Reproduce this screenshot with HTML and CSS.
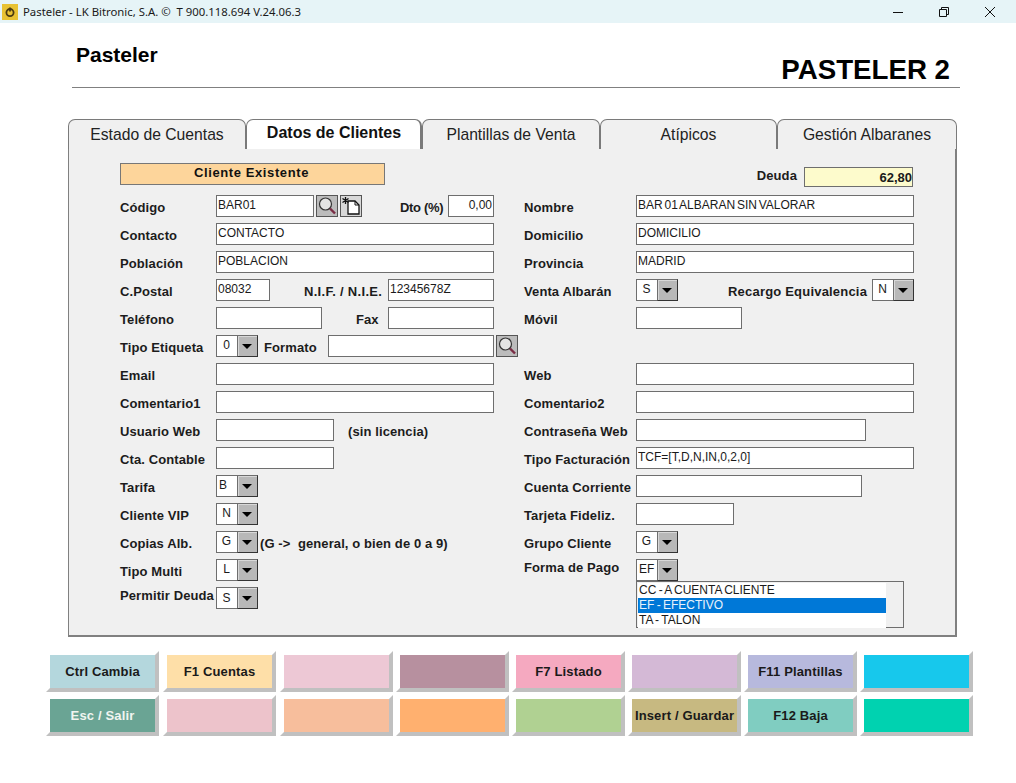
FILE: index.html
```html
<!DOCTYPE html>
<html>
<head>
  <title>Pasteler</title>
  <link rel="stylesheet" href="styles.css">
</head>
<body>
  <div class="titlebar">
    <svg class="app-icon" width="16" height="16" viewBox="0 0 16 16">
      <rect width="16" height="16" fill="#e8c233"/>
      <circle cx="8" cy="8.6" r="3.6" fill="none" stroke="#4a3a10" stroke-width="1.8"/>
      <path d="M8 3.5v4" stroke="#4a3a10" stroke-width="1.8"/>
    </svg>
    <span class="window-title">Pasteler - LK Bitronic, S.A. ©&nbsp; T 900.118.694 V.24.06.3</span>
    <div class="window-controls">
      <svg width="12" height="12" viewBox="0 0 12 12"><path d="M1 6.5h10" stroke="#111" stroke-width="1"/></svg>
      <svg width="12" height="12" viewBox="0 0 12 12"><path d="M1.5 3.5h7v7h-7zM3.500 3.500v-2h7v7h-2" fill="none" stroke="#111" stroke-width="1"/></svg>
      <svg width="12" height="12" viewBox="0 0 12 12"><path d="M1 1l10 10M11 1L1 11" stroke="#111" stroke-width="1"/></svg>
    </div>
  </div>

  <div class="header">
    <h2 class="app-name">Pasteler</h2>
    <h1 class="app-version">PASTELER 2</h1>
  </div>

  <div class="tabs">
    <div class="tab">Estado de Cuentas</div>
    <div class="tab active">Datos de Clientes</div>
    <div class="tab">Plantillas de Venta</div>
    <div class="tab">Atípicos</div>
    <div class="tab">Gestión Albaranes</div>
  </div>

  <div class="panel">
    <div class="status-row">
      <div class="status">Cliente Existente</div>
      <div class="debt">
        <label>Deuda</label>
        <input class="debt-value" value="62,80">
      </div>
    </div>

    <div class="form">
      <div class="column">
        <div class="row">
          <label class="name">Código</label>
          <input class="w98" value="BAR01">
          <button class="icon-btn search">
            <svg width="20" height="20" viewBox="0 0 20 20"><circle cx="8.500" cy="8" r="6" fill="#e4e4e4" stroke="#333" stroke-width="1.200"/><path d="M13 12.500l5 5" stroke="#7a2c44" stroke-width="2.400"/></svg>
          </button>
          <button class="icon-btn new">
            <svg width="20" height="20" viewBox="0 0 20 20"><path d="M7 5h7l4 4v9H7z" fill="#fff" stroke="#111" stroke-width="1.300"/><path d="M14 5v4h4" fill="none" stroke="#111"/><path d="M4.500 1v7M1.500 2.500l6 4M7.500 2.500l-6 4" stroke="#111" stroke-width="1.300"/></svg>
          </button>
          <label class="side dto">Dto (%)</label>
          <input class="w46 num" value="0,00">
        </div>
        <div class="row"><label class="name">Contacto</label><input class="w278" value="CONTACTO"></div>
        <div class="row"><label class="name">Población</label><input class="w278" value="POBLACION"></div>
        <div class="row">
          <label class="name">C.Postal</label>
          <input class="w54" value="08032">
          <label class="side nif">N.I.F. / N.I.E.</label>
          <input class="w106" value="12345678Z">
        </div>
        <div class="row">
          <label class="name">Teléfono</label>
          <input class="w106">
          <label class="side fax">Fax</label>
          <input class="w106">
        </div>
        <div class="row">
          <label class="name">Tipo Etiqueta</label>
          <div class="combo"><input value="0" class="center"><span class="arrow"></span></div>
          <label class="side formato">Formato</label>
          <input class="w166">
          <button class="icon-btn search next">
            <svg width="20" height="20" viewBox="0 0 20 20"><circle cx="8.500" cy="8" r="6" fill="#e4e4e4" stroke="#333" stroke-width="1.200"/><path d="M13 12.500l5 5" stroke="#7a2c44" stroke-width="2.400"/></svg>
          </button>
        </div>
        <div class="row"><label class="name">Email</label><input class="w278"></div>
        <div class="row"><label class="name">Comentario1</label><input class="w278"></div>
        <div class="row">
          <label class="name">Usuario Web</label>
          <input class="w118">
          <label class="side licence">(sin licencia)</label>
        </div>
        <div class="row"><label class="name">Cta. Contable</label><input class="w118"></div>
        <div class="row">
          <label class="name">Tarifa</label>
          <div class="combo"><input value="B"><span class="arrow"></span></div>
        </div>
        <div class="row">
          <label class="name">Cliente VIP</label>
          <div class="combo"><input value="N" class="center"><span class="arrow"></span></div>
        </div>
        <div class="row">
          <label class="name">Copias Alb.</label>
          <div class="combo"><input value="G" class="center"><span class="arrow"></span></div>
          <label class="side hint">(G -&gt;&nbsp; general, o bien de 0 a 9)</label>
        </div>
        <div class="row">
          <label class="name">Tipo Multi</label>
          <div class="combo"><input value="L" class="center"><span class="arrow"></span></div>
        </div>
        <div class="row">
          <label class="name raised">Permitir Deuda</label>
          <div class="combo"><input value="S" class="center low"><span class="arrow"></span></div>
        </div>
      </div>

      <div class="column right">
        <div class="row"><label class="name">Nombre</label><input class="w278" value="BAR 01 ALBARAN SIN VALORAR"></div>
        <div class="row"><label class="name">Domicilio</label><input class="w278" value="DOMICILIO"></div>
        <div class="row"><label class="name">Provincia</label><input class="w278" value="MADRID"></div>
        <div class="row">
          <label class="name">Venta Albarán</label>
          <div class="combo"><input value="S" class="center"><span class="arrow"></span></div>
          <label class="side recargo">Recargo Equivalencia</label>
          <div class="combo"><input value="N" class="center"><span class="arrow"></span></div>
        </div>
        <div class="row"><label class="name">Móvil</label><input class="w106"></div>
        <div class="row"></div>
        <div class="row"><label class="name">Web</label><input class="w278"></div>
        <div class="row"><label class="name">Comentario2</label><input class="w278"></div>
        <div class="row"><label class="name">Contraseña Web</label><input class="w230"></div>
        <div class="row"><label class="name">Tipo Facturación</label><input class="w278" value="TCF=[T,D,N,IN,0,2,0]"></div>
        <div class="row"><label class="name">Cuenta Corriente</label><input class="w226"></div>
        <div class="row"><label class="name">Tarjeta Fideliz.</label><input class="w98"></div>
        <div class="row">
          <label class="name">Grupo Cliente</label>
          <div class="combo"><input value="G" class="center"><span class="arrow"></span></div>
        </div>
        <div class="row">
          <label class="name raised">Forma de Pago</label>
          <div class="combo open">
            <input value="EF"><span class="arrow"></span>
            <ul class="dropdown">
              <li>CC - A CUENTA CLIENTE</li>
              <li class="selected">EF - EFECTIVO</li>
              <li>TA - TALON</li>
            </ul>
          </div>
        </div>
      </div>
    </div>
  </div>

  <div class="keys">
    <button class="key" style="background-color:#b4d7dd">Ctrl Cambia</button>
    <button class="key" style="background-color:#fedfa8">F1 Cuentas</button>
    <button class="key" style="background-color:#edc8d5"></button>
    <button class="key" style="background-color:#b7909f"></button>
    <button class="key" style="background-color:#f5a9c0">F7 Listado</button>
    <button class="key" style="background-color:#d4b9d6"></button>
    <button class="key" style="background-color:#b7b9dd">F11 Plantillas</button>
    <button class="key" style="background-color:#17c8ec"></button>
    <button class="key light" style="background-color:#6aa494">Esc / Salir</button>
    <button class="key" style="background-color:#edc3cb"></button>
    <button class="key" style="background-color:#f7be9c"></button>
    <button class="key" style="background-color:#ffb06f"></button>
    <button class="key" style="background-color:#b0d192"></button>
    <button class="key" style="background-color:#c7b981">Insert / Guardar</button>
    <button class="key" style="background-color:#80cdc1">F12 Baja</button>
    <button class="key" style="background-color:#00d2b0"></button>
  </div>
</body>
</html>
```

FILE: styles.css
```css
body {
  margin: 0;
  background-color: #fff;
  color: #111;
  font-family: "Liberation Sans", Arial, sans-serif;
  font-size: 13px;
}

/* Window title bar */
.titlebar {
  display: flex;
  align-items: center;
  height: 23px;
  padding-left: 2px;
  background-color: #e6f4f7;
}

.app-icon {
  margin-right: 5px;
}

.window-title {
  font-family: "Noto Sans", sans-serif;
  font-size: 11.350px;
  color: #1a1a1a;
}

.window-controls {
  display: flex;
  gap: 34px;
  margin-left: auto;
  margin-right: 20px;
}

/* Page header */
.header {
  display: flex;
  justify-content: space-between;
  width: 874px;
  height: 64px;
  margin-left: 72px;
  padding: 0 10px 0 4px;
  border-bottom: 1px solid #808080;
}

.app-name {
  margin: 20px 0 0;
  font-size: 21px;
  line-height: 24px;
  color: #000;
}

.app-version {
  margin: 30px 0 0;
  font-size: 27.700px;
  line-height: 33px;
  color: #000;
}

/* Tabs */
.tabs {
  display: grid;
  grid-template-columns: 178px 176px 178px 177px 180px;
  margin: 31px 0 0 68px;
  height: 30px;
}

.tab {
  box-sizing: border-box;
  height: 30px;
  border: 1px solid #7a7a7a;
  border-bottom: none;
  border-radius: 7px 7px 0 0;
  background-color: #f0f0f0;
  font-size: 15.700px;
  line-height: 29px;
  text-align: center;
  color: #222;
}

.tab.active {
  position: relative;
  z-index: 1;
  background-color: #fff;
  border-right-width: 2px;
  font-size: 16px;
  font-weight: bold;
  line-height: 26px;
  padding-left: 1px;
  color: #111;
}

/* Main panel */
.panel {
  box-sizing: border-box;
  width: 889px;
  height: 489px;
  margin: -1px 0 0 68px;
  padding: 14px 0 0 51px;
  background-color: #f0f0f0;
  border: 2px solid #808080;
  border-top-width: 1px;
  border-left-width: 1px;
}

.status-row {
  display: flex;
  justify-content: space-between;
  width: 793px;
  height: 22px;
  margin-bottom: 10px;
}

.status {
  box-sizing: border-box;
  width: 265px;
  height: 22px;
  border: 1px solid #777;
  background-color: #fdd59b;
  font-weight: bold;
  letter-spacing: 0.600px;
  line-height: 17px;
  text-align: center;
  padding-right: 2px;
}

.debt {
  display: flex;
  gap: 7px;
  height: 20px;
  margin-top: 4px;
}

.debt label {
  font-weight: bold;
  line-height: 17px;
}

input.debt-value {
  width: 109px;
  height: 20px;
  background-color: #fdfbcc;
  font-size: 13px;
  font-weight: bold;
  text-align: right;
  padding: 0;
}

/* Form layout */
.form {
  display: grid;
  grid-template-columns: 404px 390px;
}

.column {
  display: flex;
  flex-direction: column;
  gap: 6px;
}

.row {
  display: flex;
  align-items: center;
  height: 22px;
}

label {
  font-weight: bold;
  color: #1c1c1c;
  letter-spacing: 0.100px;
  white-space: nowrap;
}

.name {
  flex: none;
  width: 96px;
  padding-top: 2px;
}

.right .name {
  width: 112px;
}

.name.raised {
  align-self: flex-start;
  padding-top: 1px;
}

.side {
  flex: none;
  padding-top: 2px;
}

.dto { width: 43px; margin: 0 5px 0 38px; letter-spacing: -0.300px; }
.nif { width: 78px; margin: 0 6px 0 34px; letter-spacing: 0.300px; }
.fax { width: 24px; margin: 0 8px 0 34px; }
.formato { margin: 0 11px 0 6px; }
.licence { margin-left: 14px; }
.hint { margin-left: 2px; }
.recargo { width: 139px; margin: 0 5px 0 50px; letter-spacing: 0.200px; }

/* Inputs */
input {
  box-sizing: border-box;
  height: 22px;
  padding: 0 1px 3px 1px;
  border: 1px solid #6e6e6e;
  border-radius: 0;
  outline: none;
  background-color: #fff;
  font-family: "Liberation Sans", Arial, sans-serif;
  font-size: 12px;
  word-spacing: -1.500px;
  color: #1a1a1a;
}

.num { text-align: right; }

.w46 { width: 46px; }
.w54 { width: 54px; }
.w98 { width: 98px; }
.w106 { width: 106px; }
.w118 { width: 118px; }
.w166 { width: 166px; }
.w226 { width: 226px; }
.w230 { width: 230px; }
.w278 { width: 278px; }

/* Combo boxes */
.combo {
  position: relative;
  display: flex;
  flex: none;
  width: 42px;
  height: 22px;
}

.combo input {
  width: 21px;
  border-right: none;
  padding-left: 2px;
}

.combo input.center {
  padding-left: 0;
  text-align: center;
}

.combo input.low {
  padding-bottom: 0;
}

.arrow {
  position: relative;
  box-sizing: border-box;
  width: 21px;
  height: 22px;
  border: 1px solid #333;
  border-top-color: #6e6e6e;
  border-left-color: #6e6e6e;
  background-color: #b8b8b8;
  box-shadow: inset 1px 1px 0 #d8d8d8;
}

.arrow::after {
  content: "";
  position: absolute;
  left: 4px;
  top: 8px;
  border-top: 5px solid #000;
  border-left: 5.500px solid transparent;
  border-right: 5.500px solid transparent;
}

.dropdown {
  position: absolute;
  z-index: 2;
  top: 22px;
  left: 0;
  box-sizing: border-box;
  width: 268px;
  height: 47px;
  margin: 0;
  padding: 1px 17px 0 1px;
  list-style: none;
  border: 1px solid #6e6e6e;
  background-color: #f0f0f0;
  font-size: 12px;
  word-spacing: -1px;
  color: #1a1a1a;
}

.dropdown li {
  height: 15px;
  padding-left: 1px;
  background-color: #fff;
  line-height: 15px;
  white-space: nowrap;
}

.dropdown li.selected {
  background-color: #0078d7;
  color: #e8f2fb;
}

/* Icon buttons */
.icon-btn {
  flex: none;
  box-sizing: border-box;
  width: 22px;
  height: 22px;
  margin-left: 2px;
  padding: 0;
  border: 1px solid #555;
  background-color: #bcbcbc;
}

.icon-btn.new {
  background-color: #d8d8d8;
}

.icon-btn svg {
  display: block;
}

/* Function keys */
.keys {
  display: grid;
  grid-template-columns: 117px 117px repeat(5, 116px) 113px;
  grid-auto-rows: 41px;
  row-gap: 3px;
  margin: 14px 0 0 46px;
}

.key {
  box-sizing: border-box;
  width: 113px;
  padding: 0;
  border: 4px solid;
  border-color: #fff #c0c0c0 #c0c0c0 #fff;
  font-family: "Liberation Sans", Arial, sans-serif;
  font-size: 13px;
  font-weight: bold;
  letter-spacing: 0.150px;
  color: #1a1a1a;
  white-space: nowrap;
}

.key.light {
  color: #f0f5f0;
}
```
